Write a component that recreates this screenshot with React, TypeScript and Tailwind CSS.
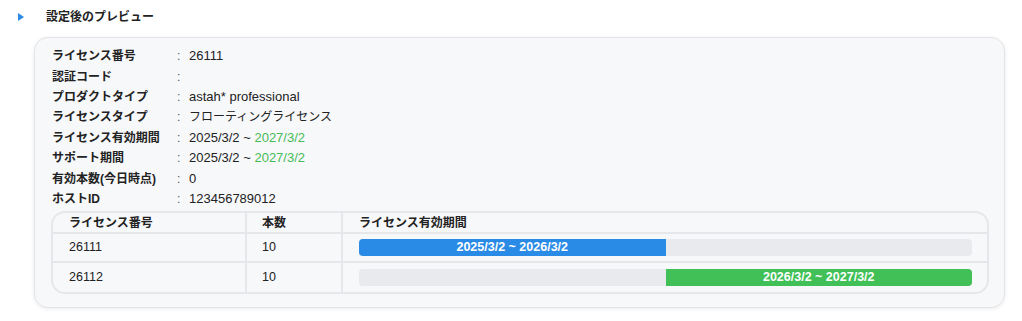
import React from "react";

const font = { fontFamily: '"Liberation Sans", "Noto Sans CJK JP", sans-serif' };

const L = ({ children }: { children: React.ReactNode }) => <span className="text-[13px]">{children}</span>;

const rows: [string, React.ReactNode][] = [
  ["ライセンス番号", <L>26111</L>],
  ["認証コード", ""],
  ["プロダクトタイプ", <L>astah* professional</L>],
  ["ライセンスタイプ", "フローティングライセンス"],
  ["ライセンス有効期間", <L>2025/3/2 ~ <span className="text-[#48bb58]">2027/3/2</span></L>],
  ["サポート期間", <L>2025/3/2 ~ <span className="text-[#48bb58]">2027/3/2</span></L>],
  ["有効本数(今日時点)", <L>0</L>],
  ["ホストID", <L>123456789012</L>],
];

export default function App() {
  return (
    <div className="w-[1022px] h-[321px] bg-white text-[12px] text-[#222]" style={font}>
      <div className="flex items-center h-[34px] pl-[18px]">
        <svg width="6" height="8" viewBox="0 0 6 8" className="mr-[22px]">
          <path d="M0 0 L6 4 L0 8 Z" fill="#2b8ae6" />
        </svg>
        <span className="font-bold">設定後のプレビュー</span>
      </div>
      <div className="ml-[34px] mt-[3px] w-[971px] h-[271px] rounded-[14px] border border-[#e3e4e7] bg-[#f7f8fa] shadow-[0_1px_4px_rgba(0,0,0,0.08)] pt-[8px] px-[16px]">
        <div className="flex flex-col">
          {rows.map(([k, v], i) => (
            <div key={i} className="flex h-[20.4px] items-center">
              <div className="w-[126px] pl-[1px] font-bold">{k}</div>
              <div className="w-[12px] text-[#555]">:</div>
              <div>{v}</div>
            </div>
          ))}
        </div>
        <div className="mt-[2px] w-[938px] rounded-[14px] border-2 border-[#e6e7ea] overflow-hidden">
          <div className="flex h-[21px] items-center border-b-2 border-[#e6e7ea] font-bold">
            <div className="w-[194px] h-full flex items-center pl-[16px] border-r-2 border-[#e6e7ea]">ライセンス番号</div>
            <div className="w-[96px] h-full flex items-center pl-[15px] border-r-2 border-[#e6e7ea]">本数</div>
            <div className="flex-1 pl-[16px]">ライセンス有効期間</div>
          </div>
          <div className="flex h-[29px] items-center border-b-2 border-[#e6e7ea] text-[12.5px]">
            <div className="w-[194px] h-full flex items-center pl-[16px] border-r-2 border-[#e6e7ea]">26111</div>
            <div className="w-[96px] h-full flex items-center pl-[15px] border-r-2 border-[#e6e7ea]">10</div>
            <div className="flex-1 pl-[16px] pr-[15px]">
              <div className="h-[17px] rounded-[4px] bg-[#e9eaed] flex">
                <div className="w-1/2 h-full rounded-[4px] rounded-r-none bg-[#2a8be6] text-white font-bold text-[12.5px] flex items-center justify-center">2025/3/2 ~ 2026/3/2</div>
              </div>
            </div>
          </div>
          <div className="flex h-[29px] items-center text-[12.5px]">
            <div className="w-[194px] h-full flex items-center pl-[16px] border-r-2 border-[#e6e7ea]">26112</div>
            <div className="w-[96px] h-full flex items-center pl-[15px] border-r-2 border-[#e6e7ea]">10</div>
            <div className="flex-1 pl-[16px] pr-[15px]">
              <div className="h-[17px] rounded-[4px] bg-[#e9eaed] flex justify-end">
                <div className="w-1/2 h-full rounded-[4px] rounded-l-none bg-[#40c057] text-white font-bold text-[12.5px] flex items-center justify-center">2026/3/2 ~ 2027/3/2</div>
              </div>
            </div>
          </div>
        </div>
      </div>
    </div>
  );
}
